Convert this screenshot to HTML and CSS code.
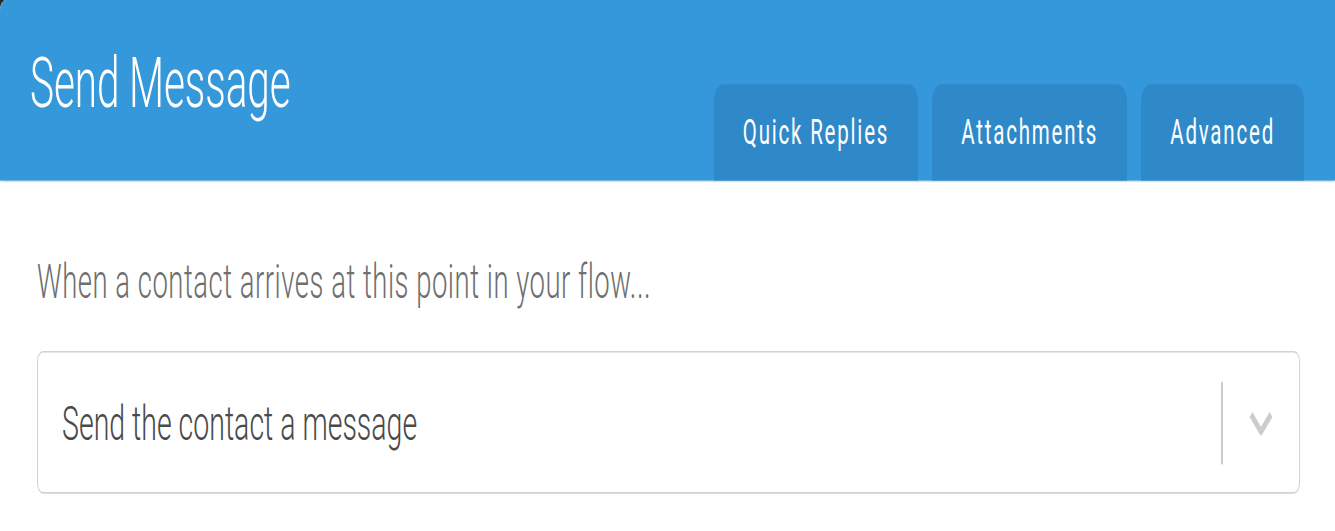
FILE: index.html
```html
<!DOCTYPE html>
<html>
<head>
<meta charset="utf-8">
<link rel="stylesheet" href="styles.css">
</head>
<body>
<div class="stage">
  <header class="header">
    <h1 class="title">Send Message</h1>
    <nav class="tabs">
      <div class="tab">Quick Replies</div>
      <div class="tab">Attachments</div>
      <div class="tab">Advanced</div>
    </nav>
  </header>
  <main class="body">
    <p class="intro">When a contact arrives at this point in your flow...</p>
    <div class="select">
      <span class="select-value">Send the contact a message</span>
      <span class="divider"></span>
      <span class="arrow">
        <svg width="24" height="14" viewBox="0 0 24 14"><polyline points="2,2 12,12 22,2" fill="none" stroke="#cccccc" stroke-width="4"/></svg>
      </span>
    </div>
  </main>
</div>
</body>
</html>
```
FILE: styles.css
```css
html, body {
  margin: 0;
  padding: 0;
  background: #2b2b2b;
}
body {
  height: 531px;
  overflow: visible;
}
.stage {
  width: 1335px;
  height: 309px;
  background: #ffffff;
  transform: scaleY(1.72);
  transform-origin: 0 0;
  font-family: Roboto, "Liberation Sans", sans-serif;
  font-weight: 300;
  border-top-left-radius: 6px;
  overflow: hidden;
}
.header {
  height: 105px;
  background: #3498db;
  display: flex;
  justify-content: space-between;
  align-items: flex-end;
  padding: 0 31px 0 30px;
  box-shadow: 0 1px 1px rgba(0, 0, 0, 0.12);
  position: relative;
}
.title {
  align-self: flex-start;
  margin: 24px 0 0;
  font-size: 40.5px;
  font-weight: 300;
  color: #ffffff;
  line-height: 48px;
  letter-spacing: -0.1px;
}
.tabs {
  display: flex;
  gap: 14px;
}
.tab {
  height: 56px;
  box-sizing: border-box;
  padding: 0 29px;
  background: #2f89c8;
  border-radius: 10px 10px 0 0;
  color: #ffffff;
  font-size: 20.5px;
  font-weight: 400;
  letter-spacing: 1.8px;
  line-height: 56px;
  display: flex;
  align-items: center;
}
.body {
  padding: 0 35px 0 37px;
}
.intro {
  margin: 41px 0 0;
  font-size: 27.5px;
  letter-spacing: 0.5px;
  line-height: 36px;
  color: #6f6f6f;
}
.select {
  margin-top: 22px;
  height: 83px;
  box-sizing: border-box;
  border: 1px solid #d2d2d2;
  border-radius: 6px;
  display: flex;
  align-items: center;
  padding-left: 24px;
}
.select-value {
  flex: 1;
  font-size: 28.5px;
  color: #4a4a4a;
  position: relative;
  top: 1px;
}
.divider {
  width: 2px;
  height: 48px;
  background: #cccccc;
}
.arrow {
  width: 76px;
  display: flex;
  justify-content: center;
}
```
